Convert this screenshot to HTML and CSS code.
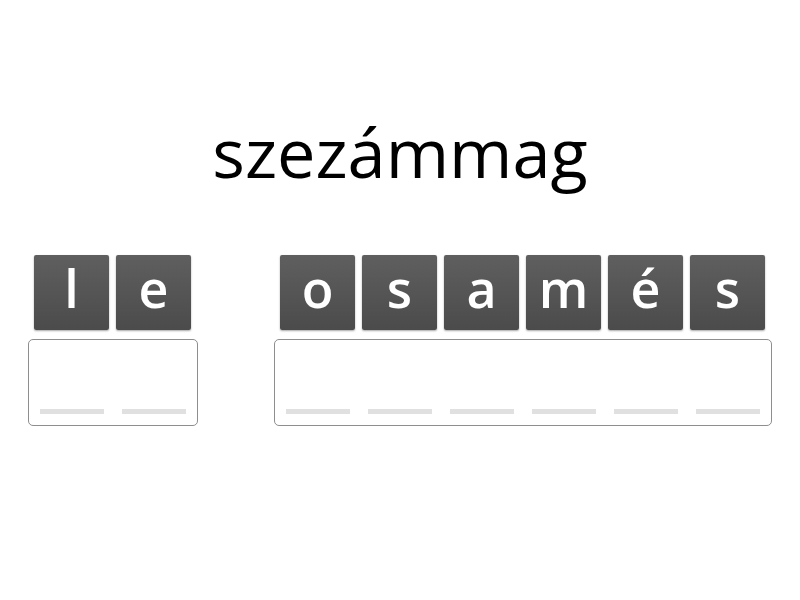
FILE: index.html
```html
<!DOCTYPE html>
<html lang="hu">
<head>
<meta charset="utf-8">
<link rel="stylesheet" href="styles.css">
</head>
<body>
<main class="page">
  <h1 class="title">szezámmag</h1>
  <div class="words">
    <div class="group">
      <div class="tiles">
        <div class="tile">l</div>
        <div class="tile">e</div>
      </div>
      <div class="box">
        <div class="slot"><span class="dash"></span></div>
        <div class="slot"><span class="dash"></span></div>
      </div>
    </div>
    <div class="group">
      <div class="tiles">
        <div class="tile">o</div>
        <div class="tile">s</div>
        <div class="tile">a</div>
        <div class="tile">m</div>
        <div class="tile">é</div>
        <div class="tile">s</div>
      </div>
      <div class="box">
        <div class="slot"><span class="dash"></span></div>
        <div class="slot"><span class="dash"></span></div>
        <div class="slot"><span class="dash"></span></div>
        <div class="slot"><span class="dash"></span></div>
        <div class="slot"><span class="dash"></span></div>
        <div class="slot"><span class="dash"></span></div>
      </div>
    </div>
  </div>
</main>
</body>
</html>
```

FILE: styles.css
```css
html, body {
  margin: 0;
  padding: 0;
  background: #ffffff;
}
body {
  width: 800px;
  height: 600px;
  overflow: hidden;
  font-family: "Open Sans", "Noto Sans", sans-serif;
}
.page {
  display: flex;
  flex-direction: column;
  align-items: center;
  padding-top: 112px;
}
.title {
  margin: 0;
  font-size: 68.5px;
  font-weight: 400;
  line-height: 80px;
  color: #000;
}
.words {
  display: flex;
  gap: 76px;
  margin-top: 63px;
}
.group {
  display: flex;
  flex-direction: column;
  gap: 9px;
}
.tiles {
  display: flex;
  gap: 7px;
  padding: 0 7px 0 6px;
}
.tile {
  width: 75px;
  height: 75px;
  box-sizing: border-box;
  background: linear-gradient(#5f5f5f, #4b4b4b);
  border-radius: 2px;
  box-shadow: 0 1px 2px rgba(0,0,0,0.35);
  color: #fff;
  font-size: 52px;
  font-weight: 600;
  line-height: 66px;
  text-align: center;
}
.box {
  display: flex;
  align-items: flex-end;
  gap: 7px;
  height: 87px;
  box-sizing: border-box;
  padding: 0 6px 11px 5px;
  border: 1.5px solid #8e8e8e;
  border-radius: 5px;
}
.slot {
  width: 75px;
  display: flex;
  justify-content: center;
}
.dash {
  display: block;
  width: 64px;
  height: 5px;
  background: #e0e0e0;
}
```
